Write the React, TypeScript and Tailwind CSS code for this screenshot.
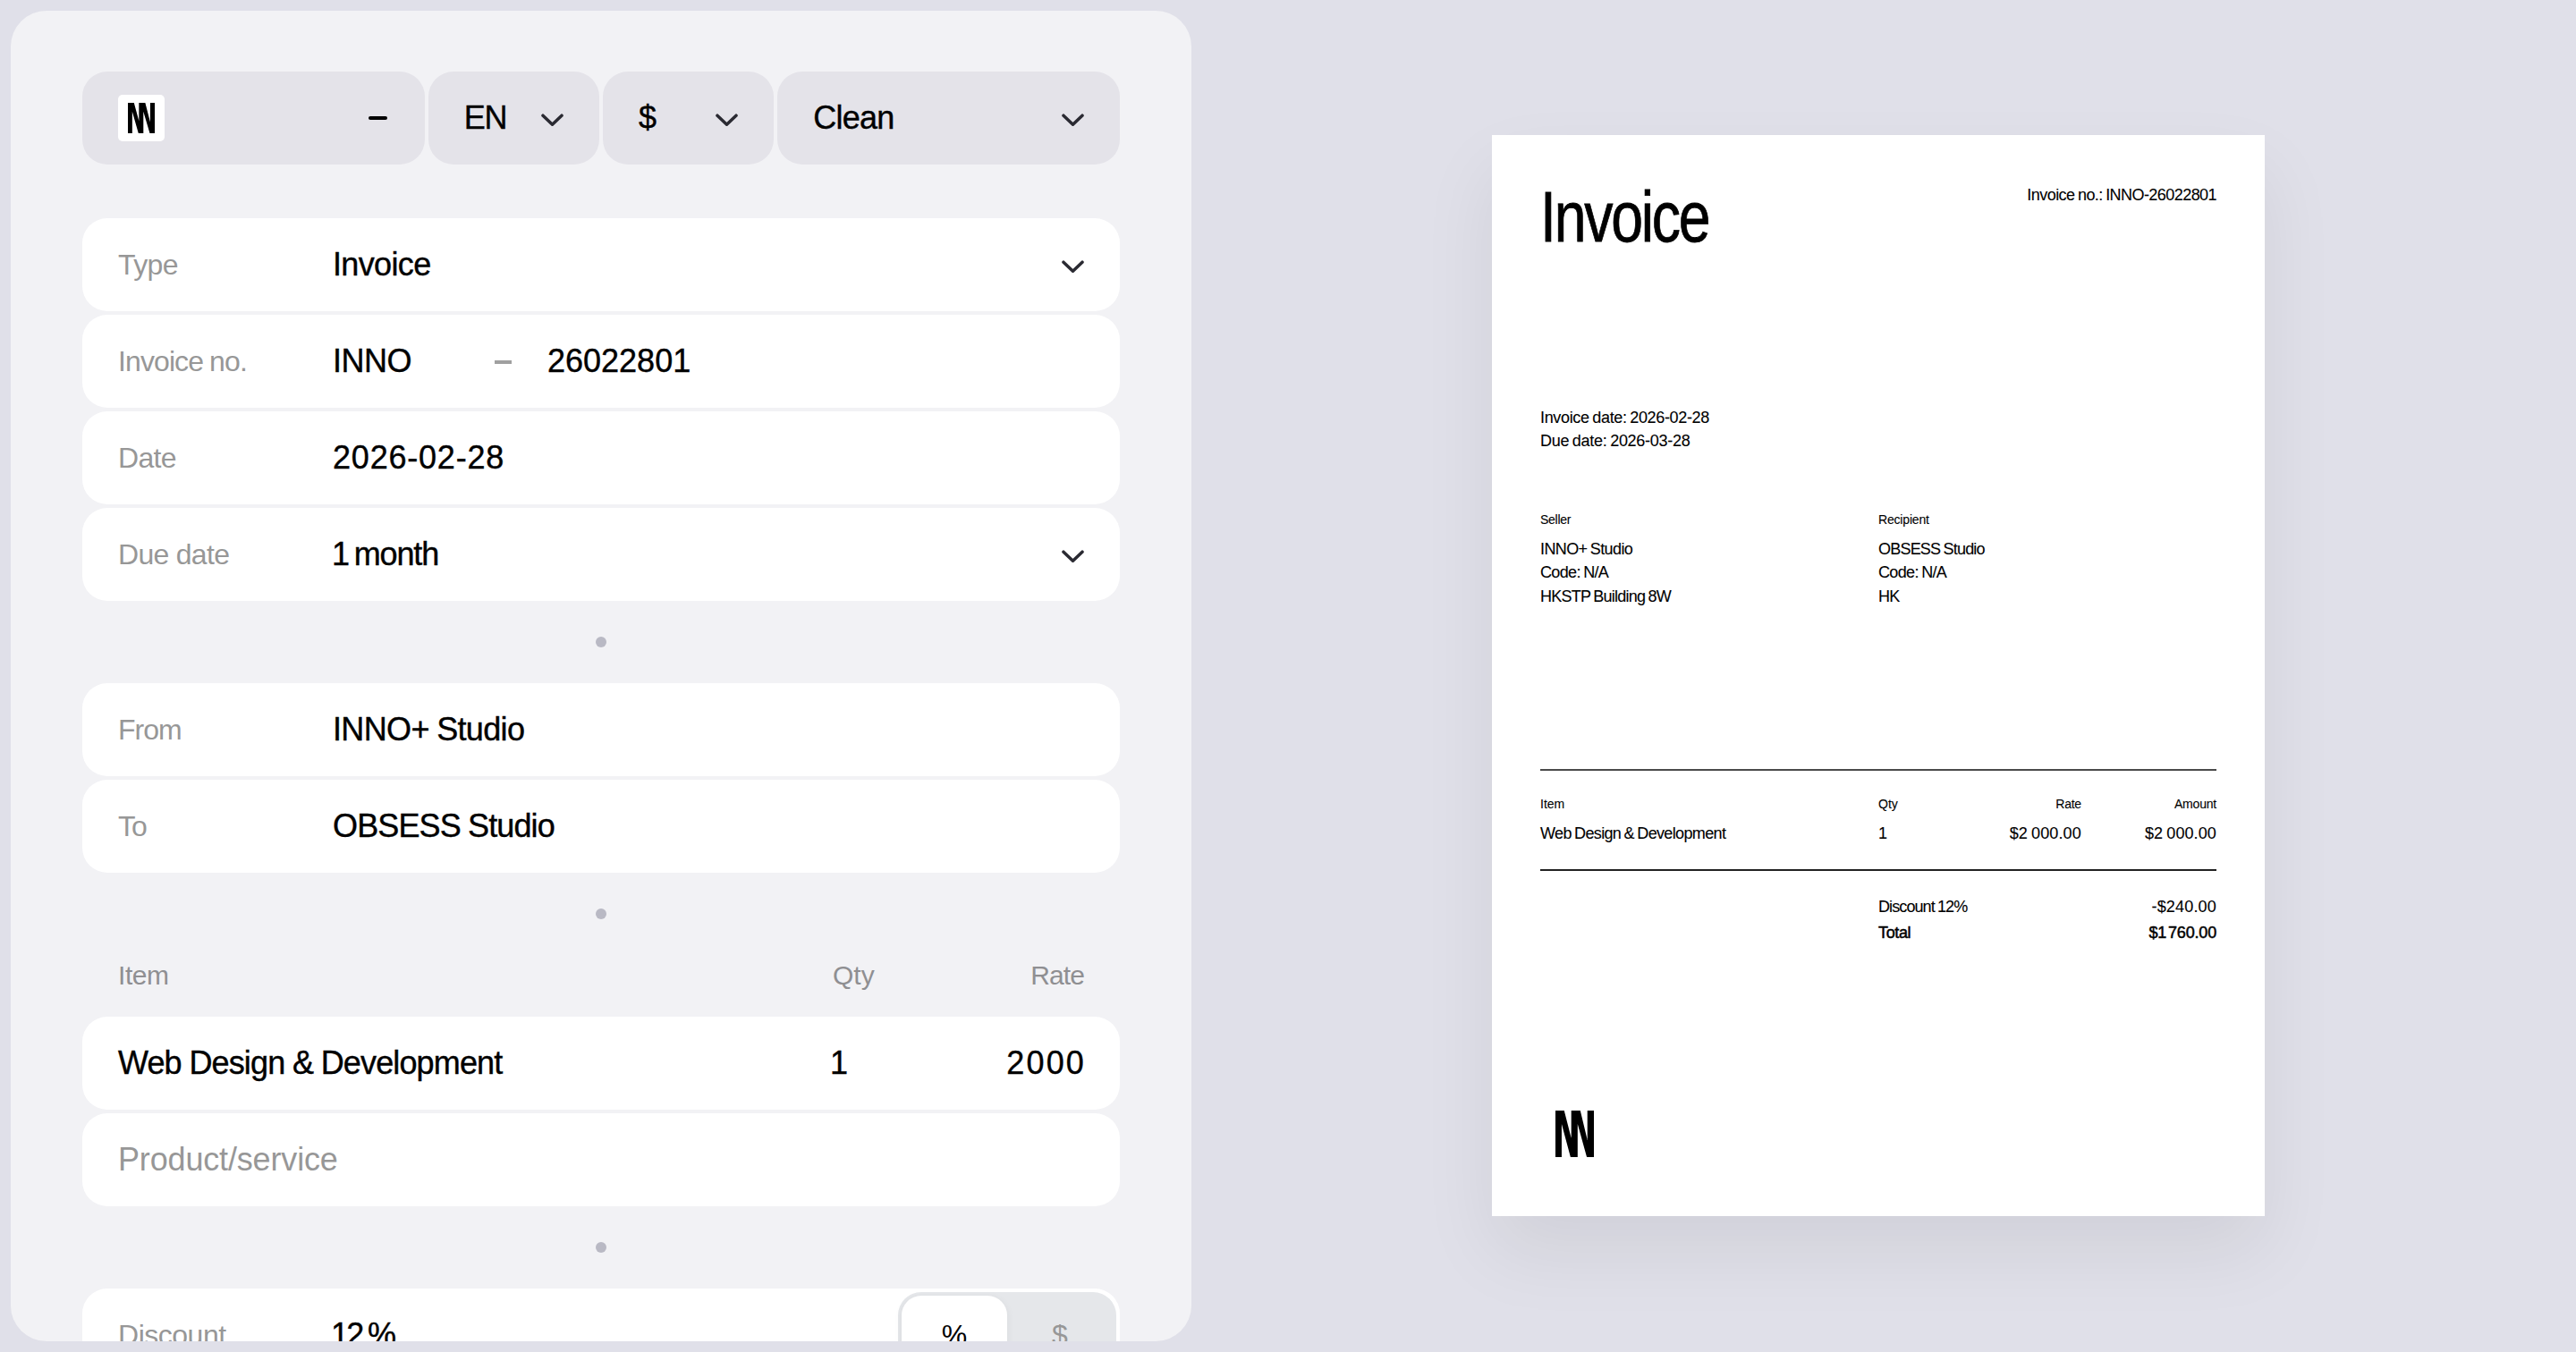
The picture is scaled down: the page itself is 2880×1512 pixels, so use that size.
import { ReactNode } from "react";
import clsx from "clsx";

type TextItem = { text: string; className?: string };

const TOP_FIELDS = [
  { label: "Type", labelClass: "tracking-[-0.02em]", value: "Invoice", valueClass: "tracking-[-0.018em]", select: true },
  { label: "Invoice no.", labelClass: "tracking-[-0.028em] [word-spacing:-1px]", value: "INNO", valueClass: "tracking-[-0.015em]", number: "26022801" },
  { label: "Date", labelClass: "tracking-[-0.022em]", value: "2026-02-28", valueClass: "tracking-[0.022em]" },
  { label: "Due date", labelClass: "tracking-[-0.022em]", value: "1 month", valueClass: "tracking-[-0.032em] [word-spacing:-3px] -ml-px", select: true },
];

const PARTIES = [
  { label: "From", labelClass: "tracking-[-0.03em]", value: "INNO+ Studio", valueClass: "tracking-[-0.018em] [word-spacing:-1px]" },
  { label: "To", labelClass: "tracking-[-0.03em]", value: "OBSESS Studio", valueClass: "tracking-[-0.024em] [word-spacing:-1px]" },
];

const SELLER: TextItem[] = [
  { text: "INNO+ Studio", className: "tracking-[-0.034em]" },
  { text: "Code: N/A", className: "tracking-[-0.036em]" },
  { text: "HKSTP Building 8W", className: "tracking-[-0.042em]" },
];

const RECIPIENT: TextItem[] = [
  { text: "OBSESS Studio", className: "tracking-[-0.044em]" },
  { text: "Code: N/A", className: "tracking-[-0.036em]" },
  { text: "HK", className: "tracking-[-0.04em]" },
];

function Logo({ className }: { className?: string }) {
  return (
    <svg className={className} viewBox="0 0 130 155" preserveAspectRatio="none" fill="#000">
      <path d="M0 0H29.5L53.5 92V0H84L108 98V0H130V155H106L75 45V155H51L21 45V155H0Z" />
    </svg>
  );
}

function Chevron() {
  return (
    <svg className="mt-1 h-[15px] w-[25px] shrink-0" viewBox="0 0 25 15" fill="none" stroke="#2a2a32" strokeWidth={3.5} strokeLinecap="round" strokeLinejoin="round">
      <path d="M2 2.2L12.5 12.2L23 2.2" />
    </svg>
  );
}

function ToolbarCell({ children }: { children: ReactNode }) {
  return (
    <div className="flex h-[104px] items-center justify-between rounded-[28px] bg-[#e4e3e9] px-10">
      {children}
    </div>
  );
}

function Row({ children, end = "pr-10" }: { children: ReactNode; end?: string }) {
  return (
    <div className={clsx("flex h-[104px] shrink-0 items-center rounded-[28px] bg-white pl-10", end)}>
      {children}
    </div>
  );
}

function Label({ children, className }: { children: ReactNode; className?: string }) {
  return <span className={clsx("w-[240px] shrink-0 text-[32px] text-[#979797]", className)}>{children}</span>;
}

function Value({ children, className }: { children: ReactNode; className?: string }) {
  return <span className={clsx("text-[36px] [-webkit-text-stroke:0.4px]", className)}>{children}</span>;
}

function Dot() {
  return (
    <div className="flex h-[92px] shrink-0 items-center justify-center">
      <span className="size-3 rounded-full bg-[#b9b9c4]" />
    </div>
  );
}

function Editor() {
  return (
    <section className="flex h-[1488px] w-[1320px] shrink-0 flex-col overflow-hidden rounded-[40px] bg-[#f2f2f5] px-20 pt-[68px]">
      <div className="grid shrink-0 grid-cols-[2fr_1fr_1fr_2fr] gap-1">
        <ToolbarCell>
          <span className="flex size-[52px] items-center justify-center rounded-[5px] bg-white">
            <Logo className="h-[34px] w-[30px]" />
          </span>
          <span className="mr-0.5 h-[3.5px] w-[21px] rounded-full bg-black" />
        </ToolbarCell>
        <ToolbarCell>
          <Value className="tracking-[-0.03em]">EN</Value>
          <Chevron />
        </ToolbarCell>
        <ToolbarCell>
          <Value>$</Value>
          <Chevron />
        </ToolbarCell>
        <ToolbarCell>
          <Value className="tracking-[-0.021em]">Clean</Value>
          <Chevron />
        </ToolbarCell>
      </div>

      <div className="mt-[60px] flex shrink-0 flex-col gap-1">
        {TOP_FIELDS.map((f) => (
          <Row key={f.label}>
            <Label className={f.labelClass}>{f.label}</Label>
            {f.number ? (
              <>
                <Value className={clsx("w-[181px]", f.valueClass)}>{f.value}</Value>
                <span className="mt-px h-1 w-[19px] bg-[#a0a0a0]" />
                <Value className="ml-10">{f.number}</Value>
              </>
            ) : (
              <Value className={clsx("grow", f.valueClass)}>{f.value}</Value>
            )}
            {f.select && <Chevron />}
          </Row>
        ))}
      </div>

      <Dot />

      <div className="flex shrink-0 flex-col gap-1">
        {PARTIES.map((f) => (
          <Row key={f.label}>
            <Label className={f.labelClass}>{f.label}</Label>
            <Value className={f.valueClass}>{f.value}</Value>
          </Row>
        ))}
      </div>

      <Dot />

      <div className="flex h-[69px] shrink-0 items-center px-10 pb-6 text-[30px] text-[#8f8f92]">
        <span className="w-[799px] tracking-[-0.015em]">Item</span>
        <span className="grow">Qty</span>
        <span className="tracking-[-0.03em]">Rate</span>
      </div>
      <div className="flex shrink-0 flex-col gap-1">
        <Row>
          <Value className="w-[796px] tracking-[-0.024em] [word-spacing:-0.5px]">Web Design &amp; Development</Value>
          <Value className="grow">1</Value>
          <Value className="-mr-0.5 tracking-[0.06em]">2000</Value>
        </Row>
        <Row>
          <span className="text-[36px] tracking-[-0.0045em] text-[#979797]">Product/service</span>
        </Row>
      </div>

      <Dot />

      <Row end="pr-1">
        <Label className="tracking-[-0.015em]">Discount</Label>
        <Value className="-ml-0.5 grow tracking-[-0.08em] [word-spacing:-0.5px]">12 %</Value>
        <div className="grid h-24 w-[244px] grid-cols-2 rounded-[26px] bg-[#e5e7ea] p-1 text-[32px]">
          <span className="flex items-center justify-center rounded-[22px] bg-white shadow-[0_2px_10px_rgba(0,0,0,0.06)]">%</span>
          <span className="flex items-center justify-center text-[#979797]">$</span>
        </div>
      </Row>
    </section>
  );
}

function Party({ title, titleClass, lines }: { title: string; titleClass: string; lines: TextItem[] }) {
  return (
    <div className="w-1/2">
      <div className={clsx("mb-[10px] text-[14px] leading-[20px]", titleClass)}>{title}</div>
      {lines.map((line) => (
        <div key={line.text} className={line.className}>{line.text}</div>
      ))}
    </div>
  );
}

function Preview() {
  return (
    <article className="mb-px flex h-[1209px] w-[864px] flex-col bg-white px-[54px] pt-[51px] pb-[66px] text-[18px] leading-[26.4px] text-black shadow-[0_40px_80px_rgba(0,0,0,0.07)] [-webkit-text-stroke:0.1px] [word-spacing:-1px]">
      <header className="flex items-start justify-between">
        <h1 className="mt-px w-[240px] origin-left scale-x-[0.805] text-[80px] leading-[80px] tracking-[-0.035em] [-webkit-text-stroke:0.8px]">Invoice</h1>
        <p className="mt-[3px] tracking-[-0.031em]">Invoice no.: INNO-26022801</p>
      </header>

      <div className="mt-[171px]">
        <p className="tracking-[-0.019em]">Invoice date: 2026-02-28</p>
        <p className="tracking-[-0.016em]">Due date: 2026-03-28</p>
      </div>

      <div className="mt-[64px] flex">
        <Party title="Seller" titleClass="tracking-[-0.02em]" lines={SELLER} />
        <Party title="Recipient" titleClass="tracking-[-0.013em]" lines={RECIPIENT} />
      </div>

      <div className="mt-[180px] border-y-2 border-t-[#4a4a4a] border-b-[#222] pt-[27px] pb-[27px]">
        <div className="grid grid-cols-[5fr_1fr_2fr_2fr] text-[14px] leading-[20px]">
          <span>Item</span>
          <span>Qty</span>
          <span className="text-right tracking-[-0.02em]">Rate</span>
          <span className="text-right tracking-[-0.015em]">Amount</span>
        </div>
        <div className="mt-[10px] grid grid-cols-[5fr_1fr_2fr_2fr]">
          <span className="tracking-[-0.036em]">Web Design &amp; Development</span>
          <span>1</span>
          <span className="text-right tracking-[0.006em]">$2 000.00</span>
          <span className="text-right tracking-[0.006em]">$2 000.00</span>
        </div>
      </div>

      <div className="ml-[50%] pt-[26px] leading-[29px]">
        <div className="flex justify-between">
          <span className="tracking-[-0.05em]">Discount 12%</span>
          <span className="tracking-[0.01em]">-$240.00</span>
        </div>
        <div className="flex justify-between [-webkit-text-stroke:0.5px]">
          <span className="tracking-[-0.02em]">Total</span>
          <span className="tracking-[-0.01em] [word-spacing:-3px]">$1 760.00</span>
        </div>
      </div>

      <Logo className="mt-auto ml-[17px] h-[52px] w-[43px]" />
    </article>
  );
}

export default function App() {
  return (
    <main className="flex h-[1512px] w-[2880px] overflow-hidden bg-[#e0e0e9] p-3 font-['Liberation_Sans',Arial,sans-serif] text-black">
      <Editor />
      <div className="flex grow items-center justify-center">
        <Preview />
      </div>
    </main>
  );
}
